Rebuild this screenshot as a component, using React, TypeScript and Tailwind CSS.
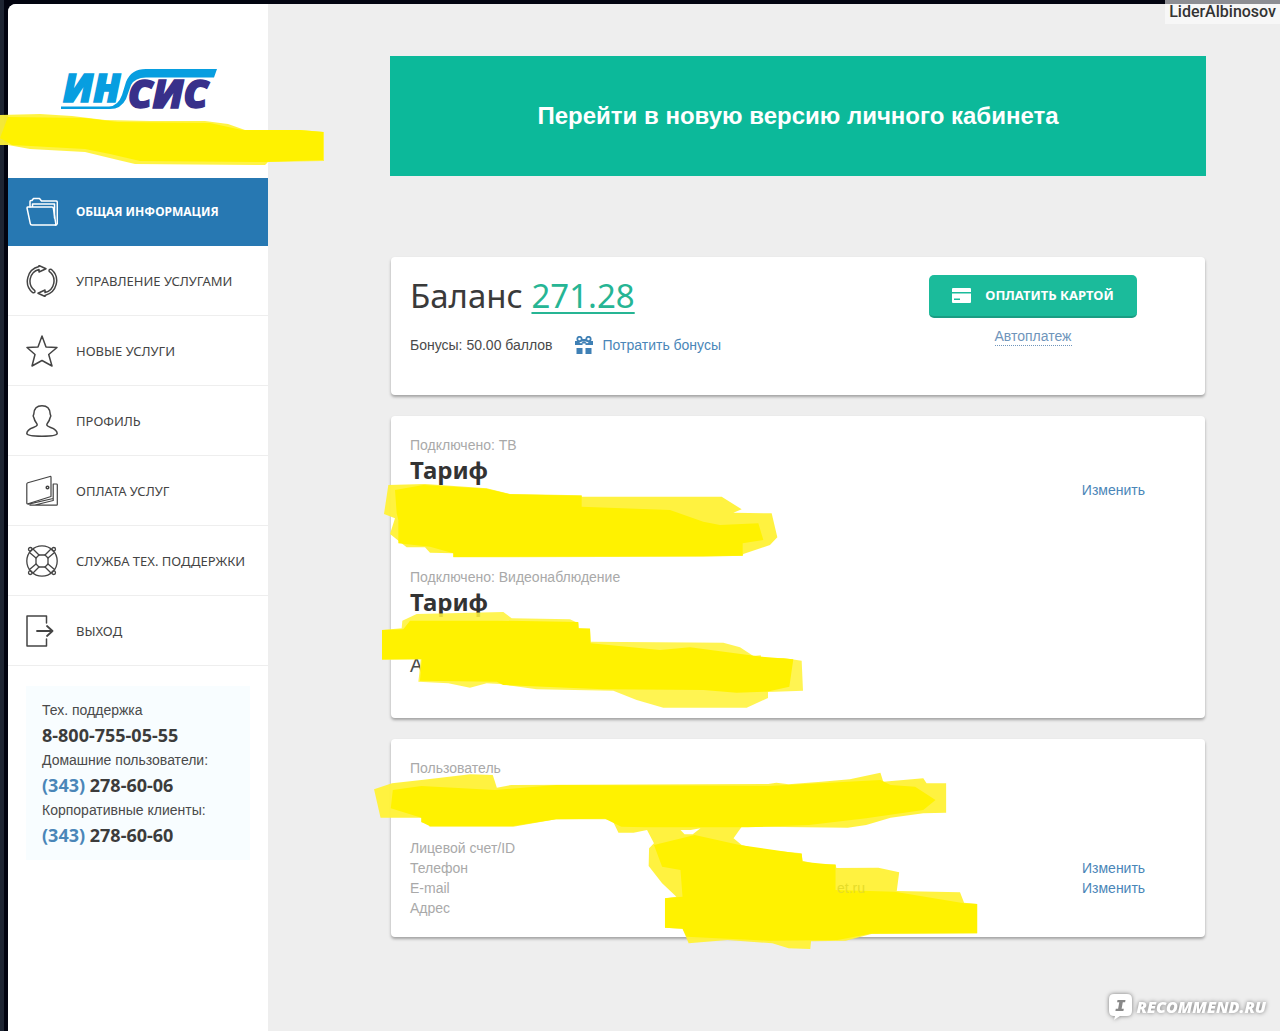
import React from "react";

const stroke = {
  fill: "none",
  stroke: "currentColor",
  strokeWidth: 1.5,
  strokeLinejoin: "round" as const,
  strokeLinecap: "round" as const,
};

function Icon({ children }: { children: React.ReactNode }) {
  return (
    <svg viewBox="0 0 32 32" className="size-8 shrink-0" aria-hidden="true" {...stroke}>
      {children}
    </svg>
  );
}

const FolderIcon = () => (
  <Icon>
    <path d="M4 11V5.500q0-1 1-1h1l1.500-2h6l2 2.500H30q1.300 0 1.300 1.300V27q0 2-2 2" />
    <path d="M6.500 11V8H28.500v3M1.500 11h24.500q1 0 1.300 1l2.700 17H6q-1.500 0-1.700-1.300L1 12q0-1 .5-1Z" />
    <path d="M28.500 11V22" />
  </Icon>
);

const CycleIcon = () => (
  <Icon>
    <path d="M8.800 25.600A12 12 0 0 1 13 4.400V7L20 3.700 13 .5V1.600A15 15 0 0 0 6.500 27.500Q9.500 28.500 8.800 25.600Z" />
    <path d="M23.200 6.400A12 12 0 0 1 19 27.600V25L12 28.300 19 31.500V30.400A15 15 0 0 0 25.500 4.500Q22.500 3.500 23.200 6.400Z" />
  </Icon>
);

const StarIcon = () => (
  <Icon>
    <path d="M16 1 20 12 31 12.500 22.700 19.500 26 31 16 25.500 6 31 9 19.500 1 12.500 12 12Z" />
  </Icon>
);

const PersonIcon = () => (
  <Icon>
    <path d="M16 .8C10.500.8 8 4.500 7.800 9c-.8 1.200-.6 3 .2 4 .8 4 3 4.800 3.200 6.800C11 23 1 22 .8 28.500c0 2 4 2.700 15.200 2.700s15.200-.7 15.200-2.700C31 22 21 23 20.800 19.800c.2-2 2.400-2.800 3.200-6.800.8-1 1-2.800.2-4C24 4.500 21.500.8 16 .8Z" />
  </Icon>
);

const WalletIcon = () => (
  <Icon>
    <path strokeWidth="1.200" d="M.8 9Q.8 8 1.800 7.700L24 1.500q1-.3 1 .7V21.500L2 28.800Q.8 29 .8 28Z" />
    <path strokeWidth="1.200" d="M2.500 29.200 27.200 23.500V9H30.500q.8 0 .8.800V29.500q0 .7-.7.700H4M27.200 23.500V25.500L9 30" />
    <circle cx="21.500" cy="12.500" r="1.300" />
  </Icon>
);

const LifebuoyIcon = () => (
  <Icon>
    <g strokeWidth="1.300">
      <circle cx="16" cy="16" r="15.200" />
      <path d="M13 10h6l3 3v6l-3 3h-6l-3-3v-6Z" />
      <path d="M13 10 7.500 4.500M10 13 3.500 7.500M19 10l5.500-5.500M22 13l6.500-5.500M10 19l-6.500 5.500M13 22l-5.500 5.500M22 19l6.500 5.500M19 22l5.500 5.500" />
      <circle cx="4.300" cy="4.300" r="1.800" />
      <circle cx="27.700" cy="4.300" r="1.800" />
      <circle cx="4.300" cy="27.700" r="1.800" />
      <circle cx="27.700" cy="27.700" r="1.800" />
    </g>
  </Icon>
);

const ExitIcon = () => (
  <Icon>
    <path d="M20.500 8V1H1v30h19.500v-7" />
    <path d="M11 16h15.500M21 11l5.500 5-5.500 5" strokeWidth="1.800" />
  </Icon>
);

const menu = [
  { label: "УПРАВЛЕНИЕ УСЛУГАМИ", Glyph: CycleIcon },
  { label: "НОВЫЕ УСЛУГИ", Glyph: StarIcon },
  { label: "ПРОФИЛЬ", Glyph: PersonIcon },
  { label: "ОПЛАТА УСЛУГ", Glyph: WalletIcon },
  { label: "СЛУЖБА ТЕХ. ПОДДЕРЖКИ", Glyph: LifebuoyIcon },
  { label: "ВЫХОД", Glyph: ExitIcon },
];

function Logo() {
  return (
    <svg viewBox="0 0 160 56" className="ml-[52px] h-14 w-40 overflow-visible" role="img" aria-label="ИНСИС">
      <path d="M1 38.500H49Q58 38 62 27L66 14Q71 1 86 1H157L154 9.500H86Q75 9.500 71 17L66 31Q61 41 50 41H1Z" fill="#079ee0" />
      <g
        fontFamily='"Open Sans", "Liberation Sans", sans-serif'
        fontWeight="800"
        fontStyle="italic"
        strokeWidth="1.500"
      >
        <text x="3" y="34" fontSize="38" fill="#079ee0" stroke="#079ee0">ИН</text>
        <text x="68" y="40" fontSize="39" fill="#38308a" stroke="#38308a">СИС</text>
      </g>
    </svg>
  );
}

function Gift() {
  return (
    <svg viewBox="0 0 18 18" className="size-[18px]" aria-hidden="true" fill="#3f80b5">
      <path d="M1.500 12h6v6h-6zM10.500 12h6v6h-6z" />
      <path d="M0 5h3l3 2.500L8 5.500h2l2 2L15 5h3v4h-7.500V7.500h-3V9H0z" />
      <circle cx="4.500" cy="3" r="2.200" fill="none" stroke="#3f80b5" strokeWidth="1.800" />
      <circle cx="13.500" cy="3" r="2.200" fill="none" stroke="#3f80b5" strokeWidth="1.800" />
      <path d="M6 3h6v2.500H6z" />
    </svg>
  );
}

const card =
  "relative rounded-[4px] bg-white px-[19px] shadow-[0_2px_3px_rgba(0,0,0,0.32)]";
const link = "text-[#4a86b8] hover:underline";

function Tariff({ kind, children }: { kind: string; children?: React.ReactNode }) {
  return (
    <section className="h-[132px]">
      <p className="leading-5 text-[#a9a9a9]">{kind}</p>
      <h2 className="font-['Noto_Sans',sans-serif] text-2xl leading-[30px] font-bold text-[#333]">Тариф</h2>
      {children}
    </section>
  );
}

export default function App() {
  return (
    <div className="relative min-h-screen border-l-4 border-[#1e2533] bg-[#020410] pt-1 pl-1 font-['Liberation_Sans',sans-serif] text-sm text-[#4a4a4a]">
      <div className="flex min-h-[calc(100vh-4px)] overflow-hidden rounded-tl-lg bg-[#eee]">
        <aside className="w-[260px] shrink-0 bg-white">
          <header className="h-[174px] pt-16">
            <Logo />
          </header>
          <nav className="font-['Noto_Sans',sans-serif] text-[13px]">
            <a href="#info" className="flex h-[68px] items-center gap-[18px] bg-[#2778b2] pl-[18px] text-xs font-bold text-white">
              <FolderIcon />
              ОБЩАЯ ИНФОРМАЦИЯ
            </a>
            {menu.map(({ label, Glyph }) => (
              <a
                key={label}
                href="#menu"
                className="flex h-[70px] items-center gap-[18px] border-b border-[#eee] pt-px pl-[18px] text-[#444]"
              >
                <Glyph />
                {label}
              </a>
            ))}
          </nav>
          <address className="mx-[18px] mt-5 bg-[#f8fdff] px-4 py-3 leading-[25px] not-italic">
            <p>Тех. поддержка</p>
            <p className="font-['Noto_Sans',sans-serif] text-lg leading-[25px] font-bold text-[#3c3c3c]">8-800-755-05-55</p>
            <p>Домашние пользователи:</p>
            <p className="font-['Noto_Sans',sans-serif] text-lg leading-[25px] font-bold text-[#3c3c3c]">
              <span className="text-[#4a86b8]">(343)</span> 278-60-06
            </p>
            <p>Корпоративные клиенты:</p>
            <p className="font-['Noto_Sans',sans-serif] text-lg leading-[25px] font-bold text-[#3c3c3c]">
              <span className="text-[#4a86b8]">(343)</span> 278-60-60
            </p>
          </address>
        </aside>

        <main className="flex-1 pt-[52px] pr-[75px] pb-16 pl-[123px]">
          <a
            href="#new"
            className="-mx-px flex h-[120px] items-center justify-center bg-[#0cb99a] text-2xl font-bold text-white"
          >
            Перейти в новую версию личного кабинета
          </a>

          <section className={`${card} mt-[81px] flex h-[138px] justify-between`}>
            <div className="pt-4">
              <h1 className="font-['Noto_Sans',sans-serif] text-[33px] leading-[46px] text-[#3a3a3a]">
                Баланс{" "}
                <a href="#balance" className="text-[#26b594] underline decoration-2 underline-offset-4">271.28</a>
              </h1>
              <div className="mt-4 flex items-center">
                <span>Бонусы: 50.00 баллов</span>
                <a href="#bonus" className={`${link} ml-[22px] flex items-center gap-2.5`}>
                  <Gift />
                  Потратить бонусы
                </a>
              </div>
            </div>
            <div className="mr-[49px] flex flex-col items-center pt-[18px]">
              <button
                type="button"
                className="flex h-[43px] w-[208px] items-center justify-center gap-3.5 rounded-[5px] border-b-2 border-[#1a9d83] bg-[#1bbb9b] font-['Noto_Sans',sans-serif] text-[13px] font-bold text-white"
              >
                <svg viewBox="0 0 19 15" className="h-[15px] w-[19px]" aria-hidden="true">
                  <path d="M1 0h17q1 0 1 1v3H0V1q0-1 1-1ZM0 5.500h19v8.500q0 1-1 1H1q-1 0-1-1Zm2 5V12h6v-1.500Z" fill="#fff" fillRule="evenodd" />
                </svg>
                ОПЛАТИТЬ КАРТОЙ
              </button>
              <a href="#auto" className="mt-[9px] border-b border-dotted border-[#6f95bb] leading-[18px] text-[#6f95bb]">
                Автоплатеж
              </a>
            </div>
          </section>

          <section className={`${card} mt-[21px] flex justify-between pt-[19px] pb-[19px]`}>
            <div>
              <Tariff kind="Подключено: ТВ" />
              <Tariff kind="Подключено: Видеонаблюдение">
                <p className="pt-9 font-['Noto_Sans',sans-serif] text-xl leading-6">А</p>
              </Tariff>
            </div>
            <a href="#tariff" className={`${link} mt-[45px] mr-[41px] self-start leading-5`}>Изменить</a>
            <svg viewBox="36 216 1200 240" className="pointer-events-none absolute top-[66px] -left-[9px] h-20 w-[400px]" aria-hidden="true">
              <path fill="#fff23a" fillOpacity=".97" d="M55 225 165 222 350 235 420 252 635 256V260H1055L1115 298 1090 308 1205 310 1222 382 1200 405 1120 432 1118 437 1000 440 250 442V430L180 428 165 412H110L60 372 75 325 42 312Z" />
              <path fill="#fff200" d="M75 240 160 225 350 236 420 253 635 257V290L900 300 1000 335 1050 345 1165 340 1180 390 1118 400V437L1000 438 250 441V430L180 410 85 400V330L80 310Z" />
            </svg>
            <svg viewBox="30 600 1281 300" className="pointer-events-none absolute top-[194px] -left-[11px] h-[100px] w-[427px]" aria-hidden="true">
              <path fill="#fff23a" fillOpacity=".88" d="M36 660 95 655 97 632 140 612 400 606 425 625 600 628 625 640 627 655H660L662 695 1060 698 1110 712 1150 738 1172 736 1175 744H1240L1295 752 1299 842 1194 846V864L1130 893H880L800 870 730 842 500 838 390 822 350 820 300 833 235 820 145 815 148 790 152 748 36 750Z" />
              <path fill="#fff200" d="M36 660 100 658 120 632 380 632 625 636V655L660 657 662 700 870 720 960 712 1175 740 1270 748 1258 830 1190 845 1100 848 1000 840 700 838 400 825 380 815 150 812 155 748H36Z" />
            </svg>
          </section>

          <section className={`${card} mt-[21px] pt-[19px] pb-[19px]`}>
            <p className="leading-5 text-[#a9a9a9]">Пользователь</p>
            <table className="mt-[60px] w-full table-fixed text-left leading-5">
              <colgroup>
                <col className="w-[270px]" />
                <col />
                <col className="w-[104px]" />
              </colgroup>
              <tbody>
                {["Лицевой счет/ID", "Телефон", "E-mail", "Адрес"].map((name) => (
                  <tr key={name}>
                    <th scope="row" className="p-0 font-normal text-[#a9a9a9]">{name}</th>
                    <td className="p-0" />
                    <td className="p-0">
                      {(name === "Телефон" || name === "E-mail") && (
                        <a href="#edit" className={link}>Изменить</a>
                      )}
                    </td>
                  </tr>
                ))}
              </tbody>
            </table>
            <svg viewBox="29 123 1490 540" preserveAspectRatio="none" className="pointer-events-none absolute top-[32px] -left-[19px] h-[180px] w-[608px]" aria-hidden="true">
              <path fill="#fff23a" fillOpacity=".97" fillRule="evenodd" d="M34 178 78 160 150 150 270 133 325 135 335 173 370 165 1000 162 1020 158 1050 163 1130 155 1200 148 1275 128 1282 155 1380 145 1388 160H1436V248L1380 250 1300 263 1240 285 1195 293 935 290 915 325 935 345 975 358 1082 370 1084 392 1120 403H1165L1167 414 1270 413 1321 427 1315 483 1470 487 1480 518 1512 522V610L1255 611 1190 632 1105 634 1103 657 1050 655 1010 640 900 630 805 640 790 596 747 593V505L775 500 740 460 707 408 708 355 720 340 703 300 670 308H633L617 268H480L375 290H170L168 278 150 277V263H50ZM785 300 810 300 834 295 815 313H795Z" />
              <path fill="#fff200" d="M80 180 150 168 330 180 480 165 1000 168 1275 150 1300 165 1360 170 1410 210 1380 240 1240 265 1100 285 950 292 700 292 640 290 600 266 480 268 375 288H170L150 276V263L75 235Z" />
              <path fill="#fff200" d="M720 345 820 315 930 345 1082 372 1084 395 1165 405V480L1310 485 1480 520 1512 522V610L1250 611 1170 630 1000 632 800 620 790 596 747 593V505L790 500 785 420 740 410Z" />
            </svg>
            <span className="pointer-events-none absolute top-[139px] left-[446px] leading-5 text-[#e6dc28]">et.ru</span>
          </section>
        </main>
      </div>

      <svg viewBox="0 0 326 56" className="pointer-events-none absolute top-[112px] -left-1 h-14 w-[326px]" aria-hidden="true">
        <path fill="#fff23a" fillOpacity=".95" d="M0 3 40 2 72 4 105 8 150 9H205L228 12 245 18 300 18 324 20V49L268 50 265 53 135 52 118 48 85 40 30 37 8 33H0Z" />
        <path fill="#fff200" d="M8 5 85 6 118 10 210 11 242 18 300 18 323 20V48L265 50 140 49 110 42 85 37 12 33 0 26Z" />
      </svg>

      <div className="absolute top-0 right-0 bg-white/55 pr-1 pl-1 font-['Roboto',sans-serif] text-base leading-6 font-medium text-[#333]">
        LiderAlbinosov
      </div>

      <div className="absolute right-3.5 bottom-2.5 flex items-center gap-1 font-['Open_Sans',sans-serif] text-base leading-7 font-extrabold text-white italic drop-shadow-[0_0_2px_#777]">
        <svg viewBox="0 0 24 27" className="h-[27px] w-6" aria-hidden="true">
          <path d="M5 0h13q5 0 5 5v12q0 5-5 5h-7l-6 4 1-4H5q-5 0-5-5V5q0-5 5-5Z" fill="#fff" />
          <path d="M8.500 6h8l-.4 2.200h-2.300l-1.200 6.600h2.200L14.400 17h-8l.4-2.200h2.300l1.200-6.600H8.100Z" fill="#888" />
        </svg>
        RECOMMEND.RU
      </div>
    </div>
  );
}
